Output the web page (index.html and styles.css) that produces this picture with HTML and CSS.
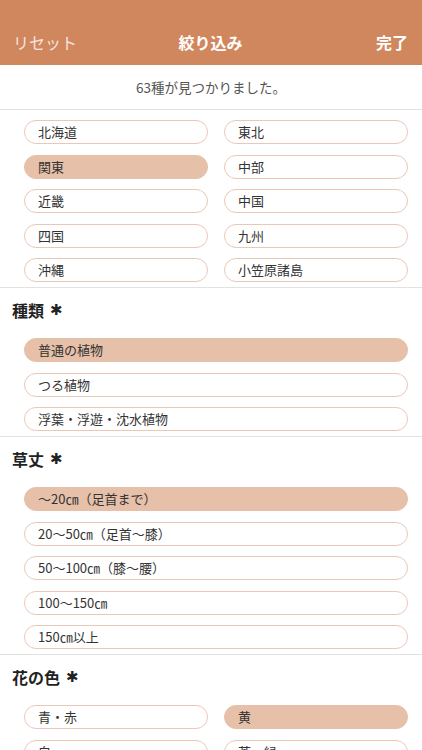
FILE: index.html
```html
<!DOCTYPE html>
<html lang="ja">
<head>
  <meta charset="UTF-8">
  <meta name="viewport" content="width=device-width, initial-scale=1.0">
  <title>絞り込み</title>
  <link rel="stylesheet" href="styles.css">
</head>
<body>
  <div class="header">
    <span class="reset">リセット</span>
    <span class="title">絞り込み</span>
    <span class="done">完了</span>
  </div>
  <div class="count">63種が見つかりました。</div>

  <div class="section">
    <div class="pills two">
      <div class="pill">北海道</div>
      <div class="pill">東北</div>
      <div class="pill on">関東</div>
      <div class="pill">中部</div>
      <div class="pill">近畿</div>
      <div class="pill">中国</div>
      <div class="pill">四国</div>
      <div class="pill">九州</div>
      <div class="pill">沖縄</div>
      <div class="pill">小笠原諸島</div>
    </div>
  </div>

  <div class="section">
    <h2>種類 <span class="mark">✱</span></h2>
    <div class="pills">
      <div class="pill on">普通の植物</div>
      <div class="pill">つる植物</div>
      <div class="pill">浮葉・浮遊・沈水植物</div>
    </div>
  </div>

  <div class="section">
    <h2>草丈 <span class="mark">✱</span></h2>
    <div class="pills">
      <div class="pill on">〜20㎝（足首まで）</div>
      <div class="pill">20〜50㎝（足首〜膝）</div>
      <div class="pill">50〜100㎝（膝〜腰）</div>
      <div class="pill">100〜150㎝</div>
      <div class="pill">150㎝以上</div>
    </div>
  </div>

  <div class="section">
    <h2>花の色 <span class="mark">✱</span></h2>
    <div class="pills two">
      <div class="pill">青・赤</div>
      <div class="pill on">黄</div>
      <div class="pill">白</div>
      <div class="pill">茶・緑</div>
    </div>
  </div>
</body>
</html>
```

FILE: styles.css
```css
body {
  margin: 0;
  font-family: "Noto Sans CJK JP", "Noto Sans", sans-serif;
  color: #333;
  background: #fff;
}
.header {
  height: 65px;
  background-color: #d1875e;
  display: flex;
  align-items: flex-end;
  justify-content: space-between;
  padding: 0 14px 11px 13px;
  box-sizing: border-box;
  font-size: 16px;
  line-height: 24px;
  color: #fff;
}
.reset {
  color: rgba(255, 255, 255, 0.8);
  width: 80px;
}
.title {
  font-weight: bold;
}
.done {
  font-weight: bold;
  width: 80px;
  text-align: right;
}
.count {
  height: 44px;
  display: flex;
  align-items: center;
  justify-content: center;
  font-size: 13.5px;
  color: #555;
  border-bottom: 1px solid #e2e2e2;
}
.section {
  padding: 10px 14px 5px 24px;
  border-bottom: 1px solid #e2e2e2;
}
.section h2 {
  height: 24px;
  margin: 0 0 16px -12px;
  font-size: 16px;
  line-height: 24px;
  font-weight: bold;
  color: #222;
  display: flex;
  align-items: center;
}
.mark {
  font-family: "DejaVu Sans", sans-serif;
  font-size: 15px;
  line-height: 1;
  margin-left: 6px;
}
.pills {
  display: grid;
  grid-template-columns: 1fr;
  row-gap: 10.5px;
}
.pills.two {
  grid-template-columns: 1fr 1fr;
  column-gap: 16px;
}
.pill {
  height: 24px;
  box-sizing: border-box;
  border: 1px solid #e9c9b6;
  border-radius: 12px;
  padding-left: 13px;
  font-size: 13px;
  line-height: 22px;
  color: #333;
}
.pill.on {
  background-color: #e6c0a8;
  border-color: #e6c0a8;
}
```
